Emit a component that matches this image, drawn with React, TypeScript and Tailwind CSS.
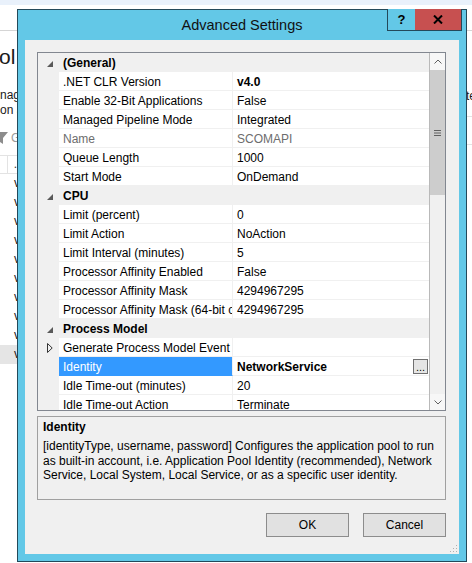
import React from 'react';

type Row =
  | { t: 'cat'; label: string }
  | {
      t: 'p';
      name: string;
      value?: string;
      bold?: boolean;
      gray?: boolean;
      sel?: boolean;
      collapsed?: boolean;
      btn?: boolean;
    };

const rows: Row[] = [
  { t: 'cat', label: '(General)' },
  { t: 'p', name: '.NET CLR Version', value: 'v4.0', bold: true },
  { t: 'p', name: 'Enable 32-Bit Applications', value: 'False' },
  { t: 'p', name: 'Managed Pipeline Mode', value: 'Integrated' },
  { t: 'p', name: 'Name', value: 'SCOMAPI', gray: true },
  { t: 'p', name: 'Queue Length', value: '1000' },
  { t: 'p', name: 'Start Mode', value: 'OnDemand' },
  { t: 'cat', label: 'CPU' },
  { t: 'p', name: 'Limit (percent)', value: '0' },
  { t: 'p', name: 'Limit Action', value: 'NoAction' },
  { t: 'p', name: 'Limit Interval (minutes)', value: '5' },
  { t: 'p', name: 'Processor Affinity Enabled', value: 'False' },
  { t: 'p', name: 'Processor Affinity Mask', value: '4294967295' },
  { t: 'p', name: 'Processor Affinity Mask (64-bit option)', value: '4294967295' },
  { t: 'cat', label: 'Process Model' },
  { t: 'p', name: 'Generate Process Model Event Log Entry', collapsed: true },
  { t: 'p', name: 'Identity', value: 'NetworkService', bold: true, sel: true, btn: true },
  { t: 'p', name: 'Idle Time-out (minutes)', value: '20' },
  { t: 'p', name: 'Idle Time-out Action', value: 'Terminate' },
];

function ExpandedGlyph() {
  return (
    <svg width="6" height="6" viewBox="0 0 6 6">
      <polygon points="6,0 6,6 0,6" fill="#595959" />
    </svg>
  );
}

function CollapsedGlyph() {
  return (
    <svg width="6" height="10" viewBox="0 0 6 10">
      <polygon points="0.5,0.5 5.2,5 0.5,9.5" fill="none" stroke="#333333" strokeWidth="1" />
    </svg>
  );
}

function GridRow({ r }: { r: Row }) {
  if (r.t === 'cat') {
    return (
      <div className="flex h-[19px] shrink-0 bg-[#f0f0f0]">
        <div className="flex w-[21px] shrink-0 items-center pl-[9px] pt-[2px]">
          <ExpandedGlyph />
        </div>
        <div className="pl-[4px] pt-[1px] font-bold leading-[18px] text-black">{r.label}</div>
      </div>
    );
  }
  return (
    <div className="flex h-[19px] shrink-0 overflow-hidden">
      <div className="flex w-[21px] shrink-0 items-center bg-[#f0f0f0] pl-[9px] pt-[1px]">
        {r.collapsed ? <CollapsedGlyph /> : null}
      </div>
      <div
        className={
          r.sel
            ? 'w-[174px] shrink-0 overflow-hidden whitespace-nowrap border-b border-r border-b-[#3399ff] border-r-[#f0f0f0] bg-[#3399ff] pl-[4px] pt-[1px] leading-[17px] text-white'
            : r.gray
            ? 'w-[174px] shrink-0 overflow-hidden whitespace-nowrap border-b border-r border-[#f0f0f0] pl-[4px] pt-[1px] leading-[17px] text-[#6d6d6d]'
            : 'w-[174px] shrink-0 overflow-hidden whitespace-nowrap border-b border-r border-[#f0f0f0] pl-[4px] pt-[1px] leading-[17px] text-black'
        }
      >
        <div className="h-[17px] pt-[1px] leading-[17px]">{r.name}</div>
      </div>
      <div className="flex min-w-0 flex-1 items-start border-b border-[#f0f0f0] pl-[4px]">
        <span
          className={
            r.bold
              ? 'flex-1 whitespace-nowrap pt-[1px] font-bold leading-[18px] text-black'
              : r.gray
              ? 'flex-1 whitespace-nowrap pt-[1px] leading-[18px] text-[#6d6d6d]'
              : 'flex-1 whitespace-nowrap pt-[1px] leading-[18px] text-black'
          }
        >
          {r.value}
        </span>
        {r.btn ? (
          <div className="mr-[1px] mt-[2px] flex h-[15px] w-[15px] items-end justify-center border border-[#707070] bg-[#e5e5e5] pb-[1px] text-[11px] leading-[10px] text-black">
            ...
          </div>
        ) : null}
      </div>
    </div>
  );
}

function ScrollBar() {
  return (
    <div className="flex w-[16px] shrink-0 flex-col border-l border-[#b9b9b9] bg-[#f0f0f0]">
      <div className="flex h-[17px] shrink-0 items-center justify-center bg-[#f7f7f7]">
        <svg width="8" height="5" viewBox="0 0 8 5">
          <polyline points="0.5,4.5 4,1 7.5,4.5" fill="none" stroke="#606060" strokeWidth="1" />
        </svg>
      </div>
      <div className="flex h-[125px] shrink-0 items-center justify-center bg-[#cdcdcd]">
        <svg width="7" height="6" viewBox="0 0 7 6">
          <rect x="0" y="0" width="7" height="1" fill="#606060" />
          <rect x="0" y="2.5" width="7" height="1" fill="#606060" />
          <rect x="0" y="5" width="7" height="1" fill="#606060" />
        </svg>
      </div>
      <div className="flex-1" />
      <div className="flex h-[16px] shrink-0 items-center justify-center bg-[#f7f7f7]">
        <svg width="8" height="5" viewBox="0 0 8 5">
          <polyline points="0.5,0.5 4,4 7.5,0.5" fill="none" stroke="#606060" strokeWidth="1" />
        </svg>
      </div>
    </div>
  );
}

function Background() {
  return (
    <div className="flex h-full flex-col">
      <div className="h-[5px] shrink-0 bg-[#e9f1fb]" />
      <div className="h-[26px] shrink-0 border-b border-[#d5d5d5] bg-white" />
      <div className="flex flex-1 justify-between">
        {/* left sliver of the application behind */}
        <div className="flex w-[17px] flex-col overflow-hidden">
          <div className="mt-[14px] ml-[-1px] h-[24px] whitespace-nowrap text-[21px] leading-[24px] text-[#1a1a1a]">
            ol
          </div>
          <div className="mt-[19px] whitespace-nowrap text-[12px] leading-[15px] text-[#1a1a1a]">
            nage
          </div>
          <div className="whitespace-nowrap text-[12px] leading-[15px] text-[#1a1a1a]">on a</div>
          <div className="mt-[12px] flex h-[15px] items-center">
            <svg width="9" height="12" viewBox="0 0 9 12" className="ml-[-1px] shrink-0">
              <polygon points="-4,0 9,0 4,6 4,12 1,10 1,6" fill="#8c8c8c" />
            </svg>
            <span className="ml-[3px] text-[12px] text-[#9a9a9a]">G</span>
          </div>
          <div className="mt-[10px] flex h-[19px] shrink-0 border-y border-[#e3e3e3]">
            <div className="w-[8px] border-r border-[#e3e3e3]" />
            <div className="pl-[6px] text-[12px] leading-[16px] text-[#333]">.</div>
          </div>
          {Array.from({ length: 10 }).map((_, i) => (
            <div
              key={i}
              className={
                i === 9
                  ? 'h-[19px] shrink-0 bg-[#e5e5e5] pl-[14px] text-[12px] leading-[19px] text-[#1a1a1a]'
                  : 'h-[19px] shrink-0 pl-[14px] text-[12px] leading-[19px] text-[#1a1a1a]'
              }
            >
              v
            </div>
          ))}
        </div>
        {/* right sliver */}
        <div className="flex w-[6px] flex-col overflow-hidden">
          <div className="mt-[58px] whitespace-nowrap text-[12px] leading-[15px] text-[#1a1a1a]">te</div>
          <div className="mt-[12px] h-[29px] border-y border-[#e3e3e3]" />
        </div>
      </div>
    </div>
  );
}

export default function App() {
  return (
    <div className="relative h-[563px] w-[472px] overflow-hidden bg-white font-['Liberation_Sans',Arial,sans-serif] text-[12px]">
      <Background />

      {/* Dialog window */}
      <div className="absolute left-[17px] top-[9px] flex h-[553px] w-[450px] flex-col border border-[#23495a] bg-[#63c8e7]">
        {/* title bar */}
        <div className="relative flex h-[30px] shrink-0 items-center justify-center">
          <span className="mt-[1px] text-[14.5px] text-[#111]">Advanced Settings</span>
          <div className="absolute right-[4px] top-[-1px] flex h-[22px] border-x border-b border-[#23495a]">
            <div className="flex w-[27px] items-center justify-center bg-[#63c8e7] text-[13px] font-bold text-black">
              ?
            </div>
            <div className="flex w-[46px] items-center justify-center bg-[#c75050]">
              <svg width="10" height="9" viewBox="0 0 10 9">
                <path d="M1 0.5 L9 8.5 M9 0.5 L1 8.5" stroke="#000" strokeWidth="2" />
              </svg>
            </div>
          </div>
        </div>

        {/* client area */}
        <div className="relative mx-[7px] mb-[7px] flex flex-1 flex-col bg-[#f0f0f0] pl-[12px] pr-[13px] pt-[12px]">
          {/* property grid */}
          <div className="flex h-[359px] shrink-0 border border-[#828790] bg-white">
            <div className="flex flex-1 flex-col overflow-hidden">
              {rows.map((r, i) => (
                <GridRow key={i} r={r} />
              ))}
            </div>
            <ScrollBar />
          </div>

          {/* description */}
          <div className="mt-[5px] h-[84px] shrink-0 border border-[#a0a0a0] bg-[#f0f0f0] pl-[5px] pt-[3px] text-black">
            <div className="font-bold leading-[15px]">Identity</div>
            <div className="mt-[4px] whitespace-nowrap leading-[14.6px]">
              <div>[identityType, username, password] Configures the application pool to run</div>
              <div>as built-in account, i.e. Application Pool Identity (recommended), Network</div>
              <div>Service, Local System, Local Service, or as a specific user identity.</div>
            </div>
          </div>

          {/* buttons */}
          <div className="mt-[13px] flex justify-end gap-[14px]">
            <button className="h-[24px] w-[83px] border border-[#8c8c8c] bg-[#e1e1e1] text-[12px] text-black">
              OK
            </button>
            <button className="h-[24px] w-[83px] border border-[#8c8c8c] bg-[#e1e1e1] text-[12px] text-black">
              Cancel
            </button>
          </div>

          {/* size grip */}
          <svg
            width="8"
            height="8"
            viewBox="0 0 8 8"
            className="absolute bottom-[1px] right-[1px]"
          >
            <rect x="6" y="0" width="1" height="1" fill="#b0b0b0" />
            <rect x="3" y="3" width="1" height="1" fill="#b0b0b0" />
            <rect x="6" y="3" width="1" height="1" fill="#b0b0b0" />
            <rect x="0" y="6" width="1" height="1" fill="#b0b0b0" />
            <rect x="3" y="6" width="1" height="1" fill="#b0b0b0" />
            <rect x="6" y="6" width="1" height="1" fill="#b0b0b0" />
          </svg>
        </div>
      </div>
    </div>
  );
}
